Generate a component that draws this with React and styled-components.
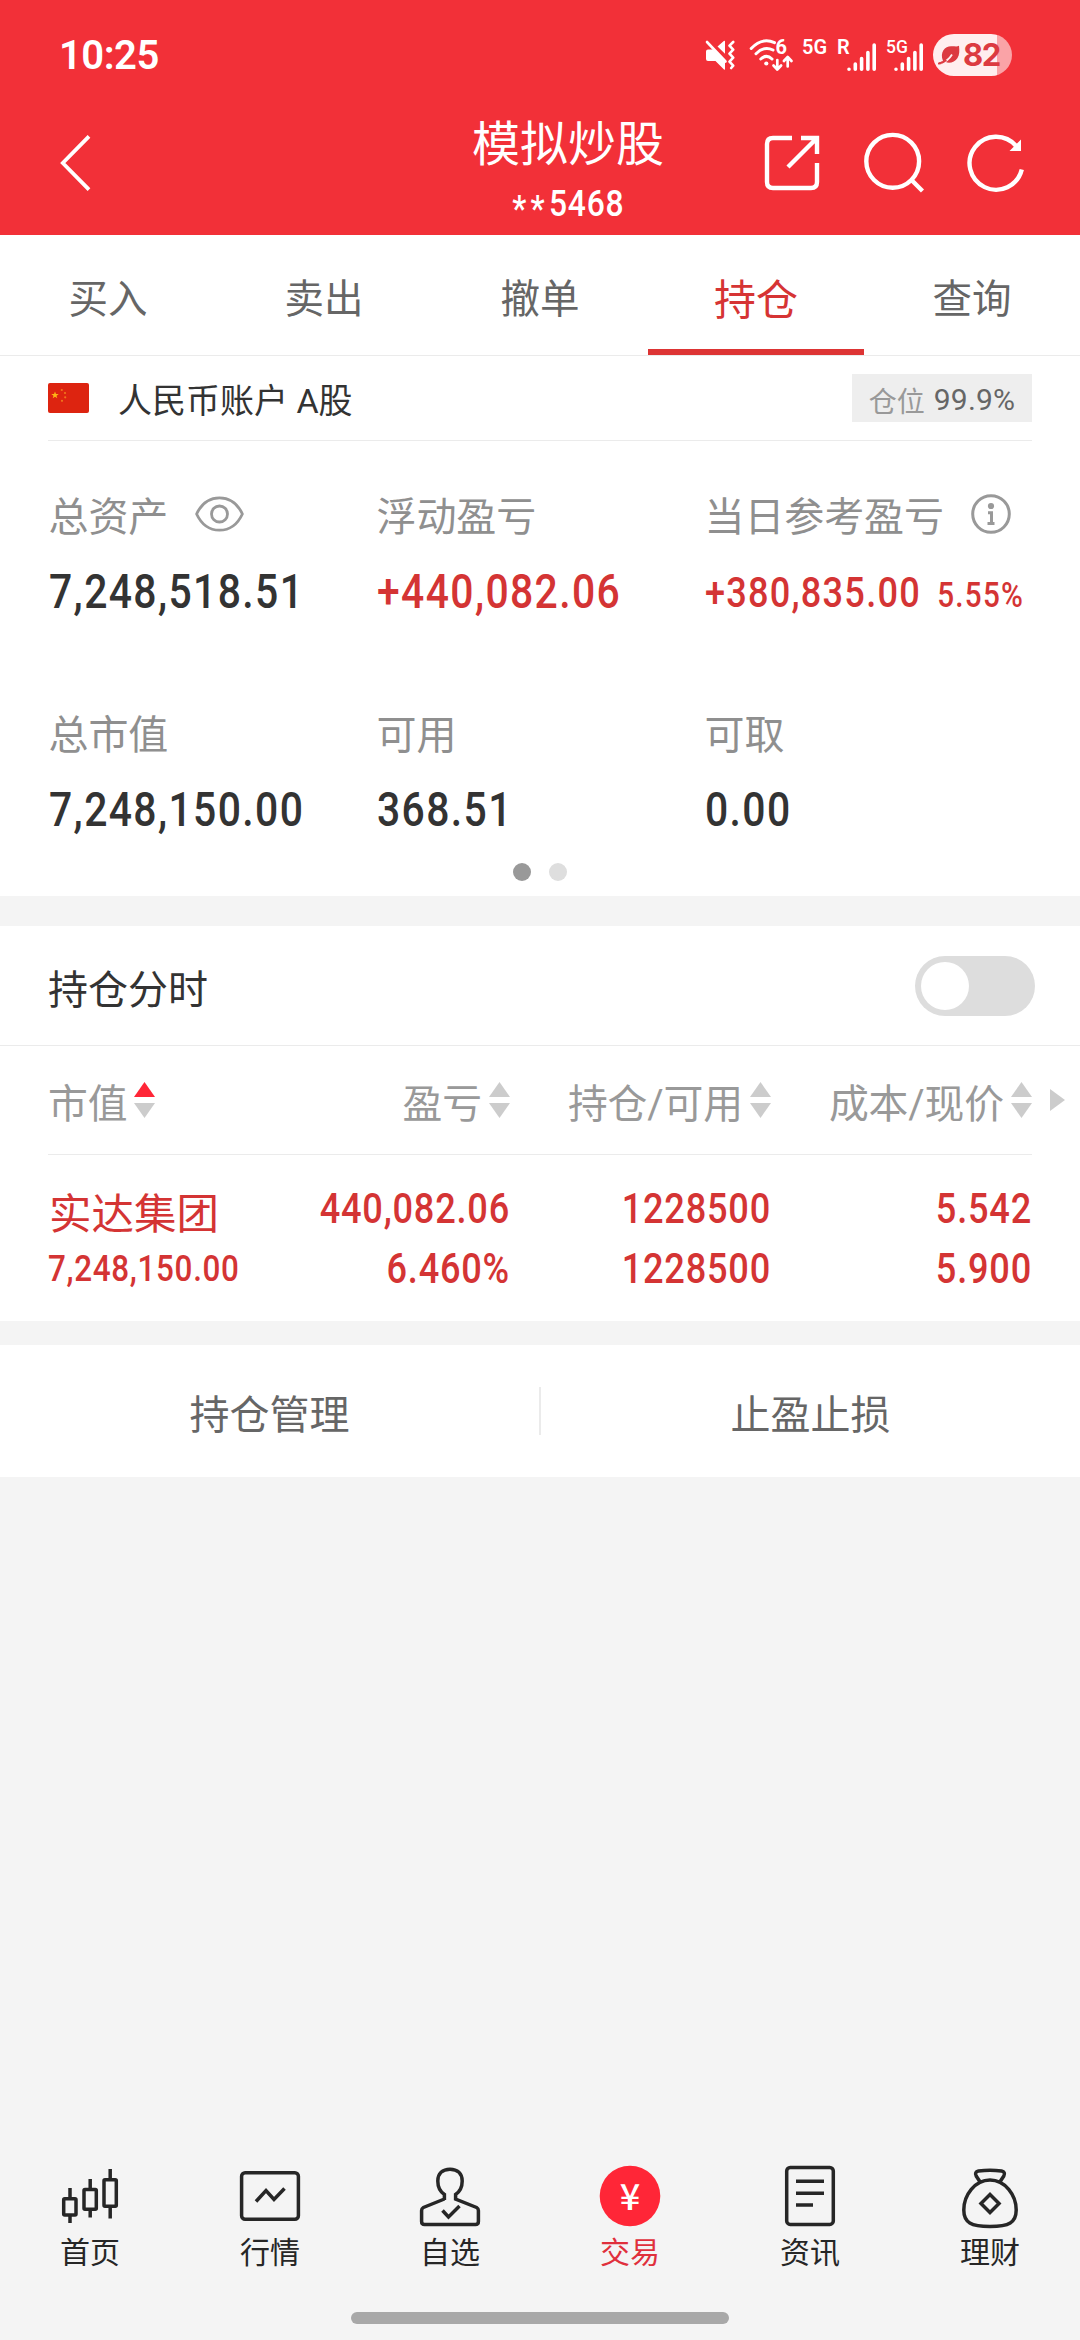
import React from "react";
import styled, { createGlobalStyle } from "styled-components";

const GlobalStyle = createGlobalStyle`
  * { box-sizing: border-box; }
  body {
    margin: 0;
    background: #f4f4f4;
    font-family: Roboto, 'Noto Sans CJK SC', sans-serif;
  }
  svg { display: block; flex: none; }
`
const Screen = styled.div`
  width: 1080px;
  height: 2340px;
  display: flex;
  flex-direction: column;
  overflow: hidden;
  background: #f4f4f4;
`
const TopArea = styled.header`
  height: 235px;
  background: #f23038;
  color: #fff;
`
const StatusBar = styled.div`
  height: 110px;
  padding: 0 68px 0 59px;
  display: flex;
  align-items: center;
  justify-content: space-between;
`
const Clock = styled.span`
  padding-top: 2px;
  font-size: 40px;
  line-height: 48px;
  font-weight: 600;
  letter-spacing: -0.5px;
`
const StatusIcons = styled.div`
  height: 42px;
  display: flex;
  align-items: flex-start;
`
const NetLabel = styled.span`
  width: ${props => props.$width}px;
  margin-left: ${props => props.$left}px;
  margin-right: ${props => props.$right || 0}px;
  font-size: ${props => props.$size}px;
  line-height: 20px;
  padding-top: 3px;
  font-weight: ${props => props.$weight || 600};
  white-space: nowrap;
`
const Battery = styled.div`
  width: 79px;
  height: 42px;
  margin-left: 9px;
  padding: 0 12px 0 5px;
  border-radius: 21px;
  display: flex;
  align-items: center;
  justify-content: space-between;
  background: linear-gradient(90deg, #ffeeef 64px, #faa3a7 64px);
  color: #dc3a41;
  font: 700 31px/42px Inter, sans-serif;
  letter-spacing: -1.4px;
`
const TitleBar = styled.div`
  height: 125px;
  padding: 0 55px 0 60px;
  display: flex;
  justify-content: space-between;
`
const BackButton = styled.div`
  width: 312px;
  padding-top: 25px;
`
const TitleBlock = styled.div`
  width: 390px;
  display: flex;
  flex-direction: column;
  align-items: center;
`
const Title = styled.h1`
  margin: 0;
  font-size: 48px;
  line-height: 70px;
  font-weight: 400;
`
const AccountNo = styled.div`
  font-size: 37px;
  line-height: 44px;
  margin-top: 2px;
  font-weight: 500;
  letter-spacing: 0.025em;
  transform: scaleX(0.86);
`
const Mask = styled.span`
  line-height: 1;
  letter-spacing: 5px;
  vertical-align: -5px;
`
const Actions = styled.div`
  width: 261px;
  padding-top: 22px;
  display: flex;
  justify-content: space-between;
`
const Tabs = styled.nav`
  height: 121px;
  display: grid;
  grid-template-columns: repeat(5, 1fr);
  background: #fff;
  border-bottom: 1px solid #ebebeb;
`
const Tab = styled.div`
  height: 120px;
  padding-top: ${props => (props.$active ? 8 : 0)}px;
  display: flex;
  align-items: center;
  justify-content: center;
  font-size: ${props => (props.$active ? 42 : 39.5)}px;
  color: ${props => (props.$active ? '#d63434' : '#666')};
  border-bottom: ${props => (props.$active ? '6px solid #dd3434' : 'none')};
`
const Panel = styled.section`
  background: #fff;
  height: ${props => props.$height}px;
  margin-bottom: ${props => props.$gap || 0}px;
`
const AccountRow = styled.div`
  height: 85px;
  margin: 0 48px;
  display: flex;
  align-items: center;
  border-bottom: 1px solid #ebebeb;
`
const AccountName = styled.span`
  flex: 1;
  margin-left: 29px;
  padding-top: 1px;
  font-size: 34px;
  color: #333;
`
const PositionTag = styled.span`
  width: 180px;
  height: 48px;
  padding-top: 3px;
  display: flex;
  align-items: center;
  justify-content: center;
  gap: 9px;
  background: #eee;
  color: #999;
  font-size: 28px;
`
const TagValue = styled.span`
  font-size: 30px;
  color: #666;
  letter-spacing: 0.2px;
`
const Summary = styled.div`
  height: 414px;
  padding: 46px 0 0 48.5px;
  display: grid;
  grid-template-columns: 328px 328px 1fr;
  grid-auto-rows: 218px;
`
const Label = styled.div`
  height: 60px;
  padding-top: 2px;
  display: flex;
  align-items: center;
  gap: ${props => props.$gap || 0}px;
  font-size: 40px;
  line-height: 60px;
  letter-spacing: -0.1px;
  color: #8f8f8f;

  svg { margin-top: -9px; }
`
const Amount = styled.div`
  height: 60px;
  margin-top: 15px;
  font-size: ${props => (props.$small ? 42 : 47.5)}px;
  line-height: ${props => (props.$small ? 62 : 60)}px;
  font-weight: 500;
  letter-spacing: 0.034em;
  transform: scaleX(0.86);
  transform-origin: left;
  color: ${props => (props.$up ? '#d43434' : '#333')};
  white-space: nowrap;
`
const Percent = styled.span`
  margin-left: 19px;
  font-size: 34.5px;
`
const Dots = styled.div`
  display: flex;
  justify-content: center;
  gap: 18px;
  padding-top: 8px;
`
const Dot = styled.i`
  width: 18px;
  height: 18px;
  border-radius: 50%;
  background: ${props => (props.$on ? '#999' : '#dedede')};
`
const SwitchRow = styled.div`
  height: 120px;
  padding: 0 45px 0 48px;
  display: flex;
  align-items: center;
  justify-content: space-between;
  border-bottom: 1px solid #ebebeb;
`
const SwitchTitle = styled.span`
  padding-top: 2px;
  font-size: 40px;
  color: #333;
`
const Switch = styled.div`
  width: 120px;
  height: 60px;
  padding: 6px;
  border-radius: 30px;
  background: #ddd;
`
const Knob = styled.div`
  width: 48px;
  height: 48px;
  border-radius: 50%;
  background: #fff;
`
const TableHead = styled.div`
  height: 109px;
  padding: 0 15px 0 48px;
  display: grid;
  grid-template-columns: 201px 261px 261px 261px 33px;
  align-items: center;
  background: linear-gradient(#ebebeb, #ebebeb) 48px 108px / 984px 1px no-repeat;
`
const HeadCell = styled.div`
  display: flex;
  align-items: center;
  justify-content: ${props => (props.$first ? 'flex-start' : 'flex-end')};
  gap: 7px;
  padding-bottom: 1px;
  font-size: 39.8px;
  letter-spacing: -0.1px;
  color: #999;
  white-space: nowrap;
`
const Holding = styled.div`
  height: 166px;
  padding: 24px 48px 0;
  display: grid;
  grid-template-columns: 201px 261px 261px 261px;
  color: #d43434;
`
const Stock = styled.div`
  height: 60px;
  font-size: 42.5px;
  line-height: 71px;
  padding-left: 1px;
  white-space: nowrap;
`
const StockValue = styled.div`
  font-size: 36.5px;
  line-height: 60px;
  font-weight: 500;
  letter-spacing: 0.022em;
  transform: scaleX(0.86);
  transform-origin: left;
`
const Figures = styled.div`
  display: flex;
  flex-direction: column;
  align-items: flex-end;
  font-size: 42px;
  line-height: 60px;
  font-weight: 500;
  letter-spacing: 0.022em;
  transform: scaleX(0.86);
  transform-origin: right;
`
const Shortcuts = styled.div`
  height: 132px;
  display: flex;
  align-items: center;
  font-size: 40px;
  color: #666;
`
const Shortcut = styled.div`
  flex: 1;
  padding-top: 1px;
  text-align: center;
`
const Divider = styled.i`
  width: 2px;
  height: 48px;
  background: #ebebeb;
`
const BottomNav = styled.nav`
  margin-top: auto;
  height: 148px;
  display: grid;
  grid-template-columns: repeat(6, 1fr);
`
const NavItem = styled.div`
  display: flex;
  flex-direction: column;
  align-items: center;
  font-size: 30px;
  line-height: 44px;
  color: ${props => (props.$active ? '#e0303c' : '#262626')};

  svg { margin-bottom: 1px; }
`
const HomeBar = styled.div`
  width: 378px;
  height: 12px;
  margin: 0 auto 16px;
  border-radius: 6px;
  background: #a8a8a8;
`

const Signal = () => (
  <svg width="30" height="42" viewBox="0 0 30 42" stroke="#fff" strokeWidth="3.6" strokeLinecap="round">
    <path d="M2 35.2v.1M8.300 30v5.200M14.600 24.500v10.700M20.900 18.500v16.700M27.200 11v24.200" />
  </svg>
)

const MuteIcon = () => (
  <svg width="30" height="42" viewBox="0 0 30 42">
    <path fill="#fff" d="M1 17.500q0-2 2-2h5l12 12V35q0 1-1 .4L10.500 27H3q-2 0-2-2zM12.500 12.500 18.800 7q1.200-.8 1.200.6v12.200z" />
    <path d="M2 8l18.500 19.500" stroke="#fff" strokeWidth="2.600" strokeLinecap="round" />
    <path d="M28.200 8l-3.700 3.700 3.700 4-3.700 4 3.700 4-3.700 4 3.700 4-2 2.300" fill="none" stroke="#fff" strokeWidth="2.600" strokeLinecap="round" strokeLinejoin="round" />
  </svg>
)

const WifiIcon = () => (
  <svg width="46" height="42" viewBox="0 0 46 42" fill="none" stroke="#fff" strokeWidth="3" strokeLinecap="round">
    <path d="M2.200 14.500Q13 3 25.500 8.600M7 19.700q8.200-8.200 17-3.700M11.800 25q5.700-5.200 11.200 0" />
    <circle cx="17.300" cy="29.500" r="2.100" fill="#fff" stroke="none" />
    <path d="M28.300 26v9M24.500 31.500l3.800 4 3.800-4M38.700 32.500v-9M34.900 27l3.800-4 3.800 4" strokeWidth="2.700" strokeLinejoin="round" />
    <text x="26.500" y="19.500" fill="#fff" stroke="none" fontSize="20" fontWeight="700" fontFamily="Roboto">6</text>
  </svg>
)

const LeafIcon = () => (
  <svg width="23" height="24" viewBox="0 0 23 24">
    <path fill="#dc3a41" d="M5 18C1.500 9 7 3.500 13 3.300 17 3.200 19 4 21 2.800c.6 5.200.5 9-1.500 12.200C17 19.500 10.500 20.800 7.500 18.800l-4 2.200q-3 .8-2.800-1.200z" />
    <path d="M2 20.500Q10 18.500 14 11.500" fill="none" stroke="#ffeeef" strokeWidth="1.800" />
    <path d="M1 20.500q4-.8 6.500-3" fill="none" stroke="#dc3a41" strokeWidth="2.200" strokeLinecap="round" />
  </svg>
)

const BackIcon = () => (
  <svg width="31" height="56" viewBox="0 0 31 56" fill="none" stroke="#fff" strokeWidth="3.800">
    <path d="M29 1.300 2.800 28 29 54.700" />
  </svg>
)

const ShareIcon = () => (
  <svg width="56" height="64" viewBox="0 0 56 64" fill="none" stroke="#fff" strokeWidth="4.400">
    <path d="M28 6H9Q3 6 3 12v38q0 6 6 6h38q6 0 6-6V31" />
    <path d="M37 6h16v16M53 6 24 35" />
  </svg>
)

const SearchIcon = () => (
  <svg width="60" height="64" viewBox="0 0 60 64" fill="none" stroke="#fff" strokeWidth="4.400">
    <circle cx="28.700" cy="29.300" r="26.400" />
    <path d="M47.500 48 58.500 59" />
  </svg>
)

const RefreshIcon = () => (
  <svg width="58" height="64" viewBox="0 0 58 64" fill="none" stroke="#fff" strokeWidth="4.400">
    <path d="M54.800 37.500A26.500 26.500 0 1 1 49.200 14" />
    <path fill="#fff" stroke="none" d="M54 7.500V19H42.500z" />
  </svg>
)

const FlagIcon = () => (
  <svg width="41" height="30" viewBox="0 0 41 30">
    <rect width="41" height="30" rx="2" fill="#dd2410" />
    <path fill="#fdb515" d="M7 8.500l1 2.500h2.700l-2.200 1.700.8 2.600L7 13.700l-2.300 1.600.8-2.600-2.200-1.700H6z" />
    <g fill="#f0761c">
      <circle cx="13.800" cy="7" r="1.100" />
      <circle cx="17" cy="10" r="1.100" />
      <circle cx="17.200" cy="14.300" r="1.100" />
      <circle cx="14" cy="17.800" r="1.100" />
    </g>
  </svg>
)

const EyeIcon = () => (
  <svg width="49" height="36" viewBox="0 0 49 36" fill="none" stroke="#999" strokeWidth="2.800">
    <path d="M1.600 18C6.500 7.500 14.500 1.800 24.500 1.800S42.500 7.500 47.400 18C42.500 28.500 34.500 34.200 24.500 34.200S6.500 28.500 1.600 18z" strokeLinejoin="round" />
    <circle cx="24.500" cy="18" r="8" />
  </svg>
)

const InfoIcon = () => (
  <svg width="40" height="40" viewBox="0 0 40 40" fill="none" stroke="#999" strokeWidth="3">
    <circle cx="20" cy="20" r="18.300" />
    <circle cx="20" cy="12" r="3.100" fill="#999" stroke="none" />
    <path d="M17 18.800h3.500v10.700M16.500 29.500h7" />
  </svg>
)

const SortIcon = ({ active }) => (
  <svg width="21" height="36" viewBox="0 0 21 36">
    <path fill={active ? '#ff2637' : '#ccc'} d="M10.500 0 21 15H0z" />
    <path fill="#ccc" d="M0 21h21L10.500 36z" />
  </svg>
)

const MoreIcon = () => (
  <svg width="15" height="22" viewBox="0 0 15 22">
    <path fill="#ccc" d="M0 0l15 11L0 22z" />
  </svg>
)

const NavIcon = ({ children }) => (
  <svg width="64" height="66" viewBox="0 0 64 66" fill="none" stroke="#262626" strokeWidth="3.500">
    {children}
  </svg>
)

const navItems = [
  {
    label: '首页',
    icon: (
      <>
        <rect x="5.700" y="34.700" width="12.300" height="16.300" rx="1" />
        <rect x="26" y="25.500" width="12.300" height="19.800" rx="1" />
        <rect x="46" y="15.700" width="12.300" height="26.500" rx="1" />
        <path d="M12 24v10M12 51v8M32.200 15v10M32.200 46v7.500M52.200 5v10M52.200 43v11.500" />
      </>
    ),
  },
  {
    label: '行情',
    icon: (
      <>
        <rect x="3.600" y="8.800" width="56.800" height="46.500" rx="3.500" />
        <path d="M18 37.500 28 26.500l8 9L46.500 24.500" />
      </>
    ),
  },
  {
    label: '自选',
    icon: (
      <>
        <path d="M26.400 36v-5.500C22 27.500 19.800 23.500 19.800 17 19.800 9.500 24.500 5.200 32 5.200S44.200 9.500 44.200 17c0 6.500-2.200 10.500-6.600 13.500V35l21 8.500q1.800 1 1.800 3V57.500q0 3-3 3H6.600q-3 0-3-3V46.500q0-2 1.800-3l21-8.500" />
        <path d="M24.500 46.500l6 6.500L41.500 42" />
      </>
    ),
  },
  {
    label: '交易',
    active: true,
    icon: (
      <>
        <circle cx="32" cy="32" r="30.300" fill="#ff2637" stroke="none" />
        <text x="32" y="45.500" textAnchor="middle" fill="#fff" stroke="none" fontSize="36" fontWeight="500" fontFamily="Noto Sans CJK SC">¥</text>
      </>
    ),
  },
  {
    label: '资讯',
    icon: (
      <>
        <rect x="8.700" y="3.400" width="46.600" height="57" rx="3.500" />
        <path d="M18 17.300h28M18 29.300h28M18 41h17" />
      </>
    ),
  },
  {
    label: '理财',
    icon: (
      <>
        <path d="M32 16C17 16 5.800 31 5.800 46c0 12.500 7.200 16.400 26.200 16.400S58.200 58.500 58.200 46C58.200 31 47 16 32 16z" />
        <path d="M22.500 18.500 18.200 12q-2-4 2.300-5 11.500-1.500 23 0 4.300 1 2.300 5l-4.300 6.500" />
        <path d="M32 30.500 41 39.500 32 48.500 23 39.500z" />
      </>
    ),
  },
]

const tabs = ['买入', '卖出', '撤单', '持仓', '查询']

const App = () => (
  <Screen>
    <GlobalStyle />
    <TopArea>
      <StatusBar>
        <Clock>10:25</Clock>
        <StatusIcons>
          <MuteIcon />
          <NetLabel $width={14} $left={0} $size={20} />
          <WifiIcon />
          <NetLabel $width={26} $left={7} $size={20}>5G</NetLabel>
          <NetLabel $width={12} $left={9} $right={-2} $size={20}>R</NetLabel>
          <Signal />
          <NetLabel $width={22} $left={9} $right={-14} $size={17.5} $weight={500}>5G</NetLabel>
          <Signal />
          <Battery>
            <LeafIcon />
            82
          </Battery>
        </StatusIcons>
      </StatusBar>
      <TitleBar>
        <BackButton><BackIcon /></BackButton>
        <TitleBlock>
          <Title>模拟炒股</Title>
          <AccountNo><Mask>**</Mask>5468</AccountNo>
        </TitleBlock>
        <Actions>
          <ShareIcon />
          <SearchIcon />
          <RefreshIcon />
        </Actions>
      </TitleBar>
    </TopArea>

    <Tabs>
      {tabs.map(tab => <Tab key={tab} $active={tab === '持仓'}>{tab}</Tab>)}
    </Tabs>

    <Panel $height={540} $gap={30}>
      <AccountRow>
        <FlagIcon />
        <AccountName>人民币账户 A股</AccountName>
        <PositionTag>仓位<TagValue>99.9%</TagValue></PositionTag>
      </AccountRow>
      <Summary>
        <div>
          <Label $gap={27}>总资产<EyeIcon /></Label>
          <Amount>7,248,518.51</Amount>
        </div>
        <div>
          <Label>浮动盈亏</Label>
          <Amount $up>+440,082.06</Amount>
        </div>
        <div>
          <Label $gap={27}>当日参考盈亏<InfoIcon /></Label>
          <Amount $up $small>+380,835.00<Percent>5.55%</Percent></Amount>
        </div>
        <div>
          <Label>总市值</Label>
          <Amount>7,248,150.00</Amount>
        </div>
        <div>
          <Label>可用</Label>
          <Amount>368.51</Amount>
        </div>
        <div>
          <Label>可取</Label>
          <Amount>0.00</Amount>
        </div>
      </Summary>
      <Dots>
        <Dot $on />
        <Dot />
      </Dots>
    </Panel>

    <Panel $height={395} $gap={24}>
      <SwitchRow>
        <SwitchTitle>持仓分时</SwitchTitle>
        <Switch><Knob /></Switch>
      </SwitchRow>
      <TableHead>
        <HeadCell $first>市值<SortIcon active /></HeadCell>
        <HeadCell>盈亏<SortIcon /></HeadCell>
        <HeadCell>持仓/可用<SortIcon /></HeadCell>
        <HeadCell>成本/现价<SortIcon /></HeadCell>
        <HeadCell><MoreIcon /></HeadCell>
      </TableHead>
      <Holding>
        <div>
          <Stock>实达集团</Stock>
          <StockValue>7,248,150.00</StockValue>
        </div>
        <Figures>
          <span>440,082.06</span>
          <span>6.460%</span>
        </Figures>
        <Figures>
          <span>1228500</span>
          <span>1228500</span>
        </Figures>
        <Figures>
          <span>5.542</span>
          <span>5.900</span>
        </Figures>
      </Holding>
    </Panel>

    <Panel $height={132}>
      <Shortcuts>
        <Shortcut>持仓管理</Shortcut>
        <Divider />
        <Shortcut>止盈止损</Shortcut>
      </Shortcuts>
    </Panel>

    <BottomNav>
      {navItems.map(item => (
        <NavItem key={item.label} $active={item.active}>
          <NavIcon>{item.icon}</NavIcon>
          {item.label}
        </NavItem>
      ))}
    </BottomNav>
    <HomeBar />
  </Screen>
)

export default App;
